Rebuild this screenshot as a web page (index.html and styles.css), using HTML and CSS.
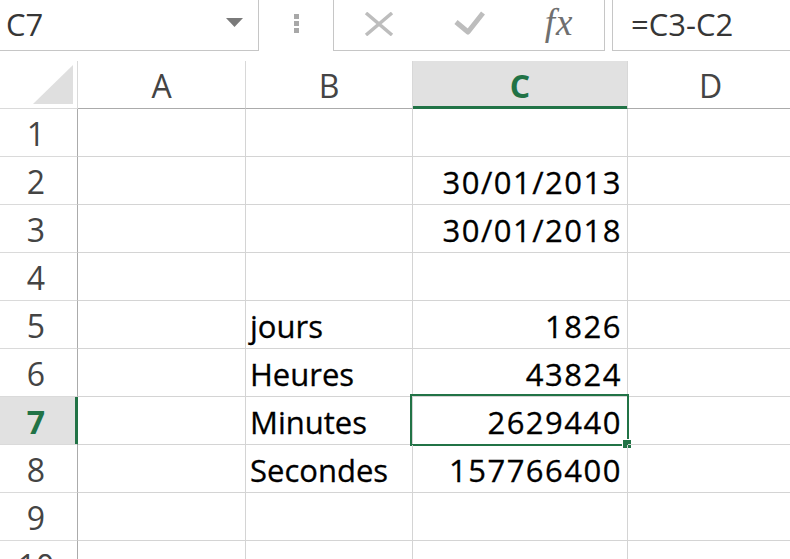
FILE: index.html
```html
<!DOCTYPE html>
<html>
<head>
<meta charset="utf-8">
<link rel="stylesheet" href="styles.css">
</head>
<body>
<div class="topbar">
  <div class="namebox">
    <span class="namebox-text">C7</span>
    <svg class="dropdown" width="17" height="9" viewBox="0 0 17 9"><polygon points="0,0 17,0 8.5,9" fill="#7a7a7a"/></svg>
  </div>
  <div class="grip"><span></span><span></span><span></span></div>
  <div class="funcs">
    <div class="func">
      <svg class="icon-x" width="30" height="24" viewBox="0 0 30 24"><path d="M2 1 L28 23 M28 1 L2 23" stroke="#bdbdbd" stroke-width="3.5" fill="none"/></svg>
    </div>
    <div class="func">
      <svg class="icon-check" width="32" height="25" viewBox="0 0 32 25"><path d="M3 12 L15 22 L30 3" stroke="#bdbdbd" stroke-width="5" fill="none" stroke-linejoin="round"/></svg>
    </div>
    <div class="func"><span class="fx">fx</span></div>
  </div>
  <div class="gap"></div>
  <div class="formula">=C3-C2</div>
</div>

<div class="sheet">
  <div class="corner"><svg width="77" height="47" viewBox="0 0 77 47"><polygon points="33,43 73,43 73,4" fill="#dfdfdf"/></svg></div>
  <div class="colhead">A</div>
  <div class="colhead">B</div>
  <div class="colhead active">C</div>
  <div class="colhead">D</div>

  <div class="rowhead">1</div><div class="cell"></div><div class="cell"></div><div class="cell"></div><div class="cell"></div>
  <div class="rowhead">2</div><div class="cell"></div><div class="cell"></div><div class="cell num">30/01/2013</div><div class="cell"></div>
  <div class="rowhead">3</div><div class="cell"></div><div class="cell"></div><div class="cell num">30/01/2018</div><div class="cell"></div>
  <div class="rowhead">4</div><div class="cell"></div><div class="cell"></div><div class="cell"></div><div class="cell"></div>
  <div class="rowhead">5</div><div class="cell"></div><div class="cell">jours</div><div class="cell num">1826</div><div class="cell"></div>
  <div class="rowhead">6</div><div class="cell"></div><div class="cell">Heures</div><div class="cell num">43824</div><div class="cell"></div>
  <div class="rowhead active">7</div><div class="cell"></div><div class="cell">Minutes</div><div class="cell num selected">2629440<span class="selbox"><span class="handle"></span></span></div><div class="cell"></div>
  <div class="rowhead">8</div><div class="cell"></div><div class="cell">Secondes</div><div class="cell num">157766400</div><div class="cell"></div>
  <div class="rowhead">9</div><div class="cell"></div><div class="cell"></div><div class="cell"></div><div class="cell"></div>
  <div class="rowhead">10</div><div class="cell"></div><div class="cell"></div><div class="cell"></div><div class="cell"></div>
</div>
</body>
</html>
```

FILE: styles.css
```css
html, body {
  margin: 0;
  padding: 0;
}
body {
  width: 790px;
  height: 559px;
  overflow: hidden;
  background: #ffffff;
  font-family: "Open Sans", "Noto Sans", sans-serif;
}

/* ---------- formula bar ---------- */
.topbar {
  display: flex;
  height: 51px;
}
.namebox {
  width: 259px;
  box-sizing: border-box;
  border-right: 1px solid #c6c6c6;
  border-bottom: 1px solid #c6c6c6;
  display: flex;
  justify-content: space-between;
  align-items: flex-start;
  padding-left: 6px;
  padding-right: 15px;
}
.namebox-text {
  font-size: 31px;
  line-height: 48px;
  color: #363636;
}
.dropdown {
  margin-top: 18px;
}
.grip {
  width: 74px;
  box-sizing: border-box;
  padding-top: 14px;
  display: flex;
  flex-direction: column;
  align-items: center;
  gap: 2px;
}
.grip span {
  width: 5px;
  height: 5px;
  background: #a8a8a8;
}
.funcs {
  width: 272px;
  box-sizing: border-box;
  border-left: 1px solid #c6c6c6;
  border-right: 1px solid #c6c6c6;
  border-bottom: 1px solid #c6c6c6;
  display: flex;
}
.func {
  width: 90px;
  display: flex;
  justify-content: center;
  align-items: flex-start;
}
.icon-x {
  margin-top: 12px;
}
.icon-check {
  margin-top: 10px;
}
.fx {
  font-family: "Liberation Serif", "DejaVu Serif", serif;
  font-style: italic;
  font-size: 37px;
  line-height: 46px;
  letter-spacing: 1px;
  color: #6f6f6f;
}
.gap {
  width: 7px;
}
.formula {
  flex: 1;
  border-left: 1px solid #c6c6c6;
  border-bottom: 1px solid #c6c6c6;
  padding-left: 18px;
  font-size: 31px;
  line-height: 48px;
  color: #363636;
}

/* ---------- sheet grid ---------- */
.sheet {
  margin-top: 10px;
  display: grid;
  grid-template-columns: 78px 168px 167px 215px 166px;
  grid-auto-rows: 48px;
}
.corner {
  box-sizing: border-box;
  border-right: 1px solid #dadada;
  border-bottom: 1px solid #dadada;
}
.corner svg {
  display: block;
}
.colhead {
  box-sizing: border-box;
  border-right: 1px solid #d8d8d8;
  border-bottom: 1px solid #ababab;
  display: flex;
  justify-content: center;
  align-items: flex-end;
  padding-bottom: 6px;
  font-size: 32px;
  line-height: 32px;
  color: #444444;
}
.colhead.active {
  background: #e1e1e1;
  border-bottom-color: #217346;
  box-shadow: inset 0 -2px 0 #217346;
  color: #217346;
  font-weight: 700;
}
.rowhead {
  box-sizing: border-box;
  border-right: 1px solid #ababab;
  border-bottom: 1px solid #dadada;
  display: flex;
  justify-content: center;
  align-items: flex-end;
  padding-right: 5px;
  padding-bottom: 6px;
  font-size: 32px;
  line-height: 32px;
  color: #444444;
}
.rowhead.active {
  background: #e1e1e1;
  border-right-color: #217346;
  box-shadow: inset -2px 0 0 #217346;
  color: #217346;
  font-weight: 700;
}
.cell {
  position: relative;
  box-sizing: border-box;
  border-right: 1px solid #d4d4d4;
  border-bottom: 1px solid #d4d4d4;
  display: flex;
  align-items: flex-end;
  padding: 0 4px 6px 4px;
  font-size: 31px;
  line-height: 31px;
  color: #000000;
  white-space: nowrap;
  -webkit-text-stroke: 0.3px #000000;
}
.cell.num {
  justify-content: flex-end;
  letter-spacing: 1.5px;
  padding-right: 5px;
}
.selbox {
  position: absolute;
  left: -3px;
  top: -3px;
  width: 219px;
  height: 52px;
  box-sizing: border-box;
  border: 2px solid #217346;
}
.handle {
  position: absolute;
  right: -4px;
  bottom: -4px;
  width: 8px;
  height: 8px;
  background: #217346;
  box-shadow: 0 0 0 1px #ffffff;
}
```
